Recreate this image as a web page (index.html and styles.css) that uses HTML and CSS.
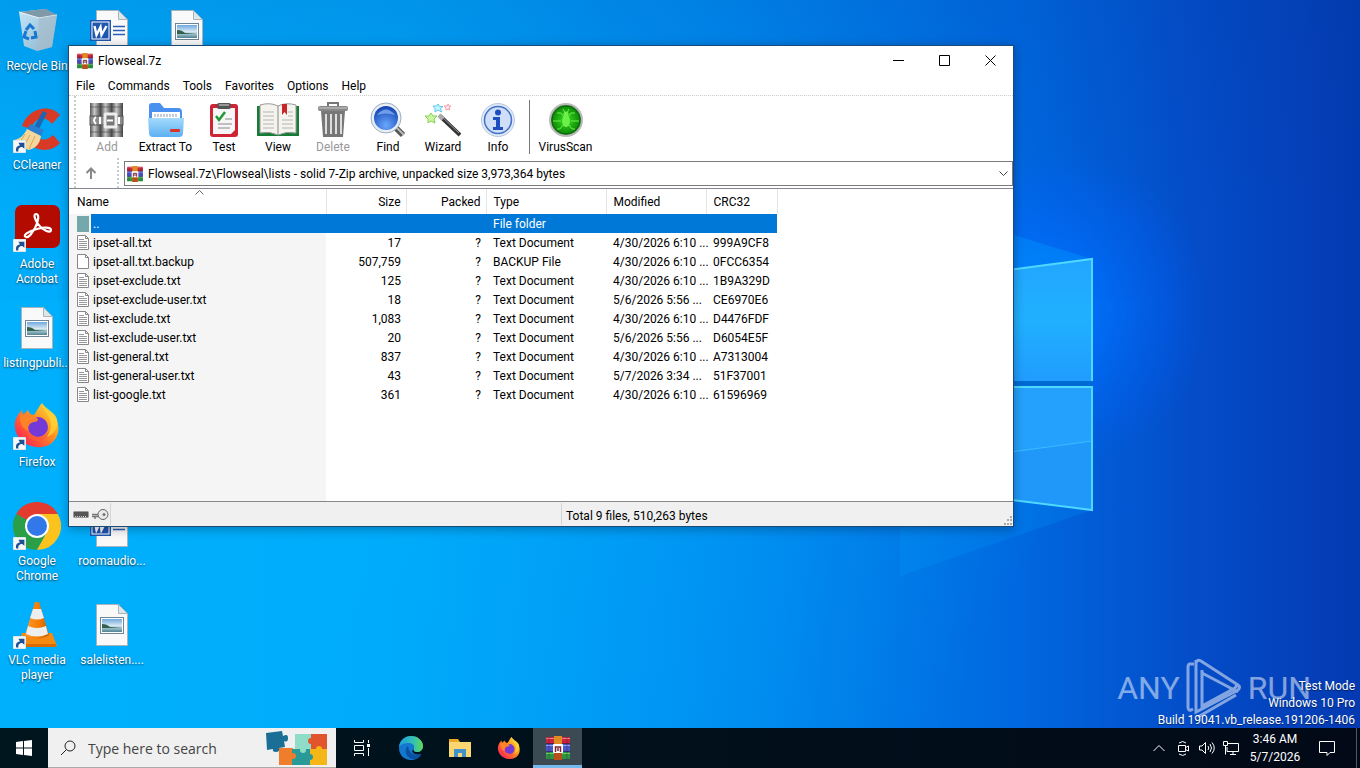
FILE: index.html
```html
<!DOCTYPE html>
<html lang="en">

<head>
    <meta charset="utf-8">
    <meta name="viewport" content="width=device-width, initial-scale=1">
    <title>Flowseal.7z</title>
    <link rel="stylesheet" href="styles.css">
</head>

<body>
    <!-- shared icons -->
    <svg class="defs" aria-hidden="true">
        <defs>
            <linearGradient id="gGlass" x1="0" y1="0" x2="1" y2="1">
                <stop offset="0" stop-color="#e8f3fa" />
                <stop offset="1" stop-color="#9fb4c4" />
            </linearGradient>
            <linearGradient id="gFolder" x1="0" y1="0" x2="0" y2="1">
                <stop offset="0" stop-color="#a4dafc" />
                <stop offset="1" stop-color="#5cb0f2" />
            </linearGradient>
            <linearGradient id="gFox" x1="1" y1="0" x2="0" y2="1">
                <stop offset="0" stop-color="#fff14a" />
                <stop offset=".4" stop-color="#ff9a1f" />
                <stop offset=".75" stop-color="#ff4040" />
                <stop offset="1" stop-color="#e5187f" />
            </linearGradient>
            <linearGradient id="gCone" x1="0" y1="0" x2="1" y2="0">
                <stop offset="0" stop-color="#ff9a2e" />
                <stop offset=".6" stop-color="#f47b00" />
                <stop offset="1" stop-color="#c85a00" />
            </linearGradient>
            <linearGradient id="gMetal" x1="0" y1="0" x2="1" y2="0">
                <stop offset="0" stop-color="#555" />
                <stop offset=".4" stop-color="#c8c8c8" />
                <stop offset="1" stop-color="#444" />
            </linearGradient>
            <linearGradient id="gSky" x1="0" y1="0" x2="0" y2="1">
                <stop offset="0" stop-color="#6fa8e0" />
                <stop offset=".5" stop-color="#d4e8f2" />
                <stop offset="1" stop-color="#4f8394" />
            </linearGradient>
            <radialGradient id="gLens" cx=".5" cy=".8" r=".8">
                <stop offset="0" stop-color="#6aa8ff" />
                <stop offset="1" stop-color="#1240b0" />
            </radialGradient>
            <radialGradient id="gVirus">
                <stop offset="0" stop-color="#3ee01e" />
                <stop offset="1" stop-color="#0b8a08" />
            </radialGradient>
            <linearGradient id="gEdge" x1="0" y1="0" x2="1" y2="0">
                <stop offset="0" stop-color="#1b9de2" />
                <stop offset=".6" stop-color="#35c1b1" />
                <stop offset="1" stop-color="#62d957" />
            </linearGradient>

            <symbol id="winrar" viewBox="0 0 24 24">
                <rect x="0" y="1" width="24" height="7" rx="1" fill="#c8243c" />
                <rect x="0" y="8" width="24" height="8" rx="1" fill="#4a55c8" />
                <rect x="0" y="16" width="24" height="7" rx="1" fill="#2f9440" />
                <path d="M0 2.500h24" stroke="#ee7a84" />
                <path d="M0 9.500h24" stroke="#8fa4ee" />
                <path d="M0 17.500h24" stroke="#74cc68" />
                <path d="M0 7.500h24M0 15.500h24" stroke="#2a1840" stroke-opacity=".6" />
                <path d="M3 1v22M21 1v22" stroke="#201030" stroke-opacity=".3" />
                <rect x="8" y="0" width="8" height="24" fill="#e08a24" />
                <rect x="8" y="17" width="8" height="7" fill="#b8501c" />
                <rect x="7" y="8" width="10" height="9" rx="1" fill="#fff" />
                <path d="M9.500 16v-5h5v5M12 12v3" fill="none" stroke="#7a2430" stroke-width="1.500" />
            </symbol>
            <symbol id="shortcut" viewBox="0 0 12 12">
                <rect width="12" height="12" fill="#f6f8fa" stroke="#9bb4c8" stroke-width=".5" />
                <path d="M3 10.500C2 7 4 5 6.500 5L5 2.500h5.500V8L8.500 6.500C6 6.500 4.500 8 5 10.500z" fill="#1d4f91" />
            </symbol>
            <symbol id="page" viewBox="0 0 32 42">
                <path d="M.5.500h22l9 9v32H.500z" fill="#f9f9f9" stroke="#a8b4bc" />
                <path d="M22.500.500v9h9z" fill="#dfe6ea" stroke="#a8b4bc" />
            </symbol>
            <symbol id="picture" viewBox="0 0 48 48">
                <use href="#page" x="8" y="3" width="32" height="42" />
                <rect x="12.500" y="16.500" width="23" height="16" fill="#fff" stroke="#6d8596" />
                <rect x="14" y="18" width="20" height="13" fill="url(#gSky)" />
                <path d="M14 23q5 0 8 3l12 1H14z" fill="#33604d" />
            </symbol>
            <symbol id="word" viewBox="0 0 48 48">
                <use href="#page" x="8" y="3" width="32" height="42" />
                <path d="M25 19.500h12M25 23.500h12M25 27.500h12" stroke="#2b5fb8" stroke-width="1.500" />
                <rect x="2" y="13" width="21" height="21" fill="#1f56b0" />
                <rect x="3.500" y="14.500" width="18" height="18" fill="#fff" />
                <rect x="4.500" y="15.500" width="16" height="16" fill="#1f56b0" />
                <path d="M6.500 19l2 9 4-8 1 8 5-9" fill="none" stroke="#fff" stroke-width="2.400" />
            </symbol>
            <symbol id="txt" viewBox="0 0 12 15">
                <path d="M.5.500h8l3 3v11H.500z" fill="#fff" stroke="#888" />
                <path d="M8.500.500v3h3" fill="none" stroke="#888" />
                <path d="M2 4.500h5M2 6.500h8M2 8.500h8M2 10.500h8M2 12.500h8" stroke="#999" />
            </symbol>
            <symbol id="blank" viewBox="0 0 12 15">
                <path d="M.5.500h8l3 3v11H.500z" fill="#fff" stroke="#888" />
                <path d="M8.500.500v3h3" fill="none" stroke="#888" />
            </symbol>
            <symbol id="firefox" viewBox="0 0 48 48">
                <path d="M2 27C1 20 4 14 9 9l1 5 5-5c1 3 3 5 6 5 3-4 5-9 8-12 2 6 8 8 12 12 5 7 6 16 2 23-5 8-13 10-20 9C12 45 3 37 2 27z" fill="url(#gFox)" />
                <path d="M29 2c0 8 9 12 9 22 0 7-4 11-9 13 10-1 17-9 15-19-2-7-10-9-15-16z" fill="#ffd335" opacity=".8" />
                <circle cx="25" cy="26" r="10" fill="#7539d8" />
                <path d="M7 14c6-3 13 0 17 3 2 1 1 4-3 4-5 1-7 5-5 9-6-1-10-8-9-16z" fill="#ff8427" opacity=".95" />
                <path d="M15 29c2 5 8 8 14 7 3-1 6-3 7-6 0 9-12 13-19 7-2-2-3-5-2-8z" fill="#ff5a38" opacity=".8" />
            </symbol>
        </defs>
    </svg>

    <main class="desktop">
        <svg class="wallpaper" viewBox="0 0 1360 728" preserveAspectRatio="none" aria-hidden="true">
            <defs>
                <linearGradient id="wBase" x1="0" y1="0" x2="1" y2="0">
                    <stop offset="0" stop-color="#00adfb" />
                    <stop offset=".3" stop-color="#00a4f8" />
                    <stop offset=".55" stop-color="#0088ee" />
                    <stop offset=".75" stop-color="#0068e0" />
                    <stop offset=".88" stop-color="#044cc8" />
                    <stop offset="1" stop-color="#043ab2" />
                </linearGradient>
                <linearGradient id="wTop" x1="0" y1="0" x2="0" y2="1">
                    <stop offset="0" stop-color="#003c9c" stop-opacity=".15" />
                    <stop offset=".3" stop-color="#003c9c" stop-opacity="0" />
                </linearGradient>
                <radialGradient id="wGlow" gradientUnits="userSpaceOnUse" cx="1050" cy="310" r="160">
                    <stop offset="0" stop-color="#0078ff" />
                    <stop offset="1" stop-color="#0060ff" stop-opacity="0" />
                </radialGradient>
                <linearGradient id="wPane" x1="0" y1="0" x2="0" y2="1">
                    <stop offset="0" stop-color="#22a6ff" />
                    <stop offset=".5" stop-color="#20b0ff" />
                    <stop offset="1" stop-color="#209cff" />
                </linearGradient>
                <linearGradient id="wRay" gradientUnits="userSpaceOnUse" x1="960" y1="700" x2="400" y2="420">
                    <stop offset="0" stop-color="#00b4ff" stop-opacity="0" />
                    <stop offset="1" stop-color="#00b4ff" stop-opacity=".45" />
                </linearGradient>
            </defs>
            <rect width="1360" height="728" fill="url(#wBase)" />
            <rect width="1360" height="728" fill="url(#wTop)" />
            <path d="M0 300h1360v428H0z" fill="url(#wRay)" />
            <rect x="860" y="130" width="400" height="400" fill="url(#wGlow)" />
            <path d="M900 200L1092 259 900 284z" fill="#00a0ff" opacity=".35" />
            <path d="M1092 510L900 486v90z" fill="#00a0ff" opacity=".2" />
            <path d="M900 284l192-25v122H900z" fill="url(#wPane)" />
            <path d="M900 387h192v123l-192-24z" fill="#2098fa" />
            <path d="M900 387h192v54l-192 26z" fill="#28a6ff" opacity=".6" />
            <path d="M900 467l192-26" stroke="#3cbcff" />
            <path d="M900 381h192v6H900z" fill="#006ad4" />
            <path d="M900 284l192-25v122M900 387h192v123l-192-24" fill="none" stroke="#4ed8ff" stroke-width="2" />
        </svg>

        <div class="icons">
            <button class="icon" type="button">
                <svg viewBox="0 0 48 48">
                    <path d="M6 5l26-3 12 6-5 32-15 4-13-5z" fill="url(#gGlass)" opacity=".85" />
                    <path d="M6 5l20 6 18-3-12-6z" fill="#7f99a8" />
                    <path d="M6 5l20 6 18-3" fill="none" stroke="#eef6fb" />
                    <path d="M26 11l-2 33 15-4 5-32z" fill="#a5bccb" opacity=".7" />
                    <path d="M13 23l4-5 4 4M22 24l1 6-5 1M16 32l-5-2 2-6" fill="none" stroke="#1877cf" stroke-width="3" />
                </svg>
                <span>Recycle Bin</span>
            </button>
            <button class="icon" type="button">
                <svg viewBox="0 0 48 48">
                    <path d="M47 9C37-3 15 2 9 20l9 3C22 10 34 10 39 18zM47 37c-8 9-22 9-30 1l7-7c6 5 12 2 16-2z" fill="#d93a25" />
                    <path d="M30 5l4 2-8 16-5-2z" fill="#1c67b3" />
                    <path d="M17 18l14 6-3 6-14-6z" fill="#2b7fd0" />
                    <path d="M14 23l14 7c-1 8-6 13-13 14L1 34c6-1 10-5 13-11z" fill="#f5d69b" />
                    <path d="M12 28l-5 8M17 29l-6 11M22 30l-6 13" stroke="#d7a95c" />
                    <use href="#shortcut" x="0" y="34" width="13" height="13" />
                </svg>
                <span>CCleaner</span>
            </button>
            <button class="icon" type="button">
                <svg viewBox="0 0 48 48">
                    <rect x="2" y="0" width="45" height="43" rx="7" fill="#b30b00" />
                    <path d="M13 32c-4-1 2-6 11-8 6-2 14-2 14 1 0 4-9 0-13-6-3-4-5-10-2-10 4 0 2 8-1 14-3 5-6 10-9 9z" fill="none" stroke="#fff" stroke-width="2.200" />
                    <use href="#shortcut" x="0" y="34" width="13" height="13" />
                </svg>
                <span>Adobe Acrobat</span>
            </button>
            <button class="icon" type="button">
                <svg><use href="#picture" /></svg>
                <span>listingpubli...</span>
            </button>
            <button class="icon" type="button">
                <svg viewBox="0 0 48 48">
                    <use href="#firefox" y="-2" width="48" height="48" />
                    <use href="#shortcut" x="0" y="34" width="13" height="13" />
                </svg>
                <span>Firefox</span>
            </button>
            <button class="icon" type="button">
                <svg viewBox="0 0 48 48">
                    <path d="M24 24L3.200 12A24 24 0 0 1 44.800 12z" fill="#e33b2e" />
                    <path d="M24 24L3.200 12A24 24 0 0 0 24 48l10-18z" fill="#2b9f47" />
                    <path d="M24 24l10 6-10 18A24 24 0 0 0 44.800 12H24z" fill="#fcc31e" />
                    <circle cx="24" cy="24" r="12" fill="#fff" />
                    <circle cx="24" cy="24" r="10" fill="#3278ea" />
                    <use href="#shortcut" x="0" y="35" width="13" height="13" />
                </svg>
                <span>Google Chrome</span>
            </button>
            <button class="icon" type="button">
                <svg viewBox="0 0 48 48">
                    <path d="M9 32h30l5 13H5z" fill="#f58a12" />
                    <path d="M5 43h38v3H5z" fill="#d96c00" />
                    <path d="M22 1h4l10 33q-12 8-24 0z" fill="url(#gCone)" />
                    <path d="M20 8h8l3 9q-7 3-14 0zM15 25q9 4 18 0l2 8q-11 5-22 0z" fill="#eee" />
                    <use href="#shortcut" x="0" y="35" width="13" height="13" />
                </svg>
                <span>VLC media player</span>
            </button>
            <button class="icon word-top" type="button" aria-label="Document">
                <svg><use href="#word" /></svg>
            </button>
            <button class="icon room" type="button">
                <svg><use href="#word" /></svg>
                <span>roomaudio...</span>
            </button>
            <button class="icon sale" type="button">
                <svg><use href="#picture" /></svg>
                <span>salelisten....</span>
            </button>
            <button class="icon pic-top" type="button" aria-label="Picture">
                <svg><use href="#picture" /></svg>
            </button>
        </div>

        <section class="window">
            <header class="titlebar">
                <svg class="icon16"><use href="#winrar" /></svg>
                <h1>Flowseal.7z</h1>
                <button type="button" aria-label="Minimize"><svg viewBox="0 0 11 11"><path d="M0 5.500h11" /></svg></button>
                <button type="button" aria-label="Maximize"><svg viewBox="0 0 11 11"><path d="M.5.500h10v10H.500z" /></svg></button>
                <button type="button" aria-label="Close"><svg viewBox="0 0 11 11"><path d="M.5.500l10 10M10.500.500l-10 10" /></svg></button>
            </header>
            <nav class="menu">
                <button type="button">File</button>
                <button type="button">Commands</button>
                <button type="button">Tools</button>
                <button type="button">Favorites</button>
                <button type="button">Options</button>
                <button type="button">Help</button>
            </nav>
            <div class="toolbar">
                <button type="button" disabled>
                    <svg viewBox="0 0 36 36">
                        <rect x="1" y="1" width="11" height="34" fill="url(#gMetal)" />
                        <rect x="12" y="1" width="11" height="34" fill="url(#gMetal)" />
                        <rect x="23" y="1" width="11" height="34" fill="url(#gMetal)" />
                        <path d="M1 5h33M1 30h33" stroke="#444" stroke-opacity=".6" />
                        <rect x="1" y="14" width="33" height="9" fill="#8d8d8d" stroke="#555" />
                        <rect x="16" y="12" width="11" height="13" rx="1" fill="#777" stroke="#eee" stroke-width="3" />
                        <path d="M7 15q-4 3 0 7M11 15v7M18 18.500h6M30 15v7" fill="none" stroke="#fff" stroke-width="2" />
                    </svg>
                    Add
                </button>
                <button type="button" class="wide">
                    <svg viewBox="0 0 36 36">
                        <path d="M1 4q0-3 3-3h8l4 5h14q4 0 4 4v20H1z" fill="#4a90f0" />
                        <path d="M4 10h28v12H4z" fill="#fff" />
                        <path d="M7 12v3M10 12v3M13 12v3M16 12v3M19 12v3M22 12v3M25 12v3M28 12v3" stroke="#89a" />
                        <path d="M0 16h36l-1 15q0 4-4 4H5q-4 0-4-4z" fill="url(#gFolder)" />
                        <rect x="22" y="27" width="10" height="3" rx="1" fill="#d8342c" />
                    </svg>
                    Extract To
                </button>
                <button type="button">
                    <svg viewBox="0 0 36 36">
                        <rect x="4" y="2" width="28" height="33" rx="3" fill="#cf2434" />
                        <path d="M7 6h22v22l-4 4H7z" fill="#f6f6f6" />
                        <rect x="11" y="1" width="14" height="6" rx="2" fill="#555" />
                        <path d="M13 3h10" stroke="#ddd" />
                        <path d="M10 14l3 4 6-8" fill="none" stroke="#219a35" stroke-width="2.500" />
                        <path d="M19 17h7M12 22h14M12 26h12" stroke="#888" />
                    </svg>
                    Test
                </button>
                <button type="button">
                    <svg viewBox="0 0 42 36">
                        <path d="M0 4h42v30H0z" fill="#157c35" />
                        <path d="M3 3q10-3 18 1 8-4 18-1v28q-10-2-18 2-8-4-18-2z" fill="#f4f3ee" stroke="#999" />
                        <path d="M21 4v29" stroke="#888" />
                        <path d="M6 10h11M6 14h11M6 18h11M6 22h11M6 26h11M25 18h11M25 22h11M25 26h11M31 14h5M31 10h5" stroke="#b5b5b5" />
                        <path d="M25 2h5v11l-2.500-3-2.500 3z" fill="#c9252b" />
                    </svg>
                    View
                </button>
                <button type="button" class="mid" disabled>
                    <svg viewBox="0 0 36 36">
                        <path d="M13 4V1h10v3" fill="none" stroke="#777" stroke-width="2" />
                        <path d="M6 9h24l-2 26H8z" fill="#777" />
                        <path d="M11 12v20M16 12v20M21 12v20M26 12v20" stroke="#ddd" stroke-width="2" />
                        <rect x="3" y="4" width="30" height="5" rx="2" fill="#888" />
                        <path d="M4 6h28" stroke="#ccc" />
                    </svg>
                    Delete
                </button>
                <button type="button">
                    <svg viewBox="0 0 36 36">
                        <path d="M25 25l8 8" stroke="#555" stroke-width="6" />
                        <path d="M26 25l8 8" stroke="#bbb" stroke-width="2" />
                        <circle cx="16" cy="16" r="15" fill="#e7eef6" stroke="#9aacc2" />
                        <circle cx="16" cy="16" r="12" fill="url(#gLens)" />
                        <path d="M7 13q9-11 18 0-9-3-18 0z" fill="#8bb8f8" opacity=".7" />
                    </svg>
                    Find
                </button>
                <button type="button" class="mid">
                    <svg viewBox="0 0 36 36">
                        <path d="M15 14l20 19" stroke="#333" stroke-width="4" />
                        <path d="M15 13l19 18" stroke="#999" />
                        <path d="M14 13l4 4" stroke="#aaa" stroke-width="4" />
                        <path d="M13 2l1.500 2.500h3.500l-2.500 2 1 3.500-3.500-2-3 2v-3.500l-2-2.500h3.500z" fill="#c8f4ff" stroke="#5cc8ee" />
                        <path d="M6 11l2 3 4 0-3 3 1 4-4-2-3 2 0-4-3-3h4z" fill="#cdf6a2" stroke="#83d452" />
                        <path d="M23 2l1 2h2l-2 2 1 2-2-1-2 1v-2l-2-2h3z" fill="#ffe4e8" stroke="#f4a0ac" />
                    </svg>
                    Wizard
                </button>
                <button type="button">
                    <svg viewBox="0 0 36 36">
                        <circle cx="18" cy="18" r="16.500" fill="#dfe9fa" stroke="#b9c9e2" />
                        <circle cx="18" cy="18" r="13.500" fill="#cfdffa" stroke="#4471c4" stroke-width="1.500" />
                        <circle cx="18" cy="10.500" r="3" fill="#1e4fc0" />
                        <path d="M13 15h7v10h3v3H13v-3h3v-7h-3z" fill="#1e4fc0" />
                    </svg>
                    Info
                </button>
                <span class="sep"></span>
                <button type="button" class="wide">
                    <svg viewBox="0 0 36 36">
                        <circle cx="18" cy="18" r="16" fill="#3a7d38" stroke="#bbb" stroke-width="2" />
                        <circle cx="18" cy="18" r="14" fill="url(#gVirus)" stroke="#0a6508" />
                        <path d="M9 11h4l3 4M27 11h-4l-3 4M5 19h8M31 19h-8M9 27h3l3-4M27 27h-3l-3-4M15 7l2 4M21 7l-2 4" fill="none" stroke="#6cf04a" />
                        <ellipse cx="18" cy="19" rx="4" ry="6" fill="#6cf04a" />
                        <circle cx="18" cy="12" r="2.500" fill="#6cf04a" />
                    </svg>
                    VirusScan
                </button>
            </div>
            <div class="address">
                <button class="up" type="button" aria-label="Up">
                    <svg viewBox="0 0 12 12"><path d="M6 12V2M1.500 6L6 1.500 10.500 6" /></svg>
                </button>
                <div class="path">
                    <svg class="icon16"><use href="#winrar" /></svg>
                    <select aria-label="Path">
                        <option>Flowseal.7z\Flowseal\lists - solid 7-Zip archive, unpacked size 3,973,364 bytes</option>
                    </select>
                    <svg class="chevron" viewBox="0 0 9 6"><path d="M.5.500l4 4 4-4" /></svg>
                </div>
            </div>
            <div class="files">
                <table>
                    <thead>
                        <tr>
                            <th class="name">Name<svg class="sort" viewBox="0 0 9 5"><path d="M.5 4.500l4-4 4 4" /></svg></th>
                            <th class="size num">Size</th>
                            <th class="size num">Packed</th>
                            <th class="type">Type</th>
                            <th class="modified">Modified</th>
                            <th class="crc">CRC32</th>
                        </tr>
                    </thead>
                    <tbody>
                        <tr class="selected">
                            <td><i class="updir"></i><span>..</span></td>
                            <td></td>
                            <td></td>
                            <td>File folder</td>
                            <td></td>
                            <td></td>
                        </tr>
                        <tr>
                            <td><svg><use href="#txt" /></svg><span>ipset-all.txt</span></td>
                            <td class="num">17</td>
                            <td class="num">?</td>
                            <td>Text Document</td>
                            <td>4/30/2026 6:10 ...</td>
                            <td>999A9CF8</td>
                        </tr>
                        <tr>
                            <td><svg><use href="#blank" /></svg><span>ipset-all.txt.backup</span></td>
                            <td class="num">507,759</td>
                            <td class="num">?</td>
                            <td>BACKUP File</td>
                            <td>4/30/2026 6:10 ...</td>
                            <td>0FCC6354</td>
                        </tr>
                        <tr>
                            <td><svg><use href="#txt" /></svg><span>ipset-exclude.txt</span></td>
                            <td class="num">125</td>
                            <td class="num">?</td>
                            <td>Text Document</td>
                            <td>4/30/2026 6:10 ...</td>
                            <td>1B9A329D</td>
                        </tr>
                        <tr>
                            <td><svg><use href="#txt" /></svg><span>ipset-exclude-user.txt</span></td>
                            <td class="num">18</td>
                            <td class="num">?</td>
                            <td>Text Document</td>
                            <td>5/6/2026 5:56 ...</td>
                            <td>CE6970E6</td>
                        </tr>
                        <tr>
                            <td><svg><use href="#txt" /></svg><span>list-exclude.txt</span></td>
                            <td class="num">1,083</td>
                            <td class="num">?</td>
                            <td>Text Document</td>
                            <td>4/30/2026 6:10 ...</td>
                            <td>D4476FDF</td>
                        </tr>
                        <tr>
                            <td><svg><use href="#txt" /></svg><span>list-exclude-user.txt</span></td>
                            <td class="num">20</td>
                            <td class="num">?</td>
                            <td>Text Document</td>
                            <td>5/6/2026 5:56 ...</td>
                            <td>D6054E5F</td>
                        </tr>
                        <tr>
                            <td><svg><use href="#txt" /></svg><span>list-general.txt</span></td>
                            <td class="num">837</td>
                            <td class="num">?</td>
                            <td>Text Document</td>
                            <td>4/30/2026 6:10 ...</td>
                            <td>A7313004</td>
                        </tr>
                        <tr>
                            <td><svg><use href="#txt" /></svg><span>list-general-user.txt</span></td>
                            <td class="num">43</td>
                            <td class="num">?</td>
                            <td>Text Document</td>
                            <td>5/7/2026 3:34 ...</td>
                            <td>51F37001</td>
                        </tr>
                        <tr>
                            <td><svg><use href="#txt" /></svg><span>list-google.txt</span></td>
                            <td class="num">361</td>
                            <td class="num">?</td>
                            <td>Text Document</td>
                            <td>4/30/2026 6:10 ...</td>
                            <td>61596969</td>
                        </tr>
                    </tbody>
                </table>
            </div>
            <footer class="status">
                <div class="status-icons">
                    <svg viewBox="0 0 36 14">
                        <rect x=".5" y="4.500" width="15" height="6" rx="1" fill="#555" stroke="#999" />
                        <path d="M2 9.500h12" stroke="#ccc" stroke-dasharray="1 1" />
                        <path d="M19 7.500h9M19 9.500h9M22 9v3" fill="none" stroke="#777" stroke-width="1.500" />
                        <circle cx="30" cy="7.500" r="5" fill="#e8e8e8" stroke="#666" />
                        <circle cx="31" cy="7.500" r="1.500" fill="#777" />
                    </svg>
                </div>
                <div class="status-left"></div>
                <div class="status-text">Total 9 files, 510,263 bytes</div>
                <svg class="grip" viewBox="0 0 10 10"><path d="M7 1h2M4 4h2M7 4h2M1 8h2M4 8h2M7 8h2" stroke="#aaa" stroke-width="2" /></svg>
            </footer>
        </section>

        <div class="watermark">
            <span>ANY</span>
            <svg viewBox="0 0 56 62" aria-hidden="true">
                <path d="M8 7H4q-2 0-2 3v40q0 4 3 3l2-1M10 3v52l42-22q3-3 0-5L15 4q-4-2-5 2M16 16l36 19M16 13v36l33-18q3-3 0-5M12 60l38-22" />
            </svg>
            <span>RUN</span>
        </div>
        <p class="build">Test Mode<br>Windows 10 Pro<br>Build 19041.vb_release.191206-1406</p>
    </main>

    <footer class="taskbar">
        <button class="start" type="button" aria-label="Start">
            <svg viewBox="0 0 16 16"><path d="M0 2l7-1v6.500H0zM8 1l8-1v7.500H8zM0 8.500h7V15l-7-1zM8 8.500h8V16l-8-1z" /></svg>
        </button>
        <label class="search">
            <svg class="glass" viewBox="0 0 16 16"><circle cx="10" cy="6" r="5" /><path d="M6.500 9.500L1 15" /></svg>
            <input type="text" placeholder="Type here to search">
            <svg class="puzzle" viewBox="0 0 64 36" aria-hidden="true">
                <path d="M14 18h14v17H14z" fill="#ef7d2c" />
                <path d="M30 4h16v15H30z" fill="#8fdcc8" />
                <path d="M46 4h16v15H46z" fill="#e2542b" />
                <path d="M27 19h18v16H27z" fill="#2a9a98" />
                <path d="M45 19h17v16H45z" fill="#f5b617" />
                <path d="M1 3l16-2 1 5q5-3 5 2t-4 3l1 6-6 1q1 4-3 4t-3-3l-6 1z" fill="#1b6e96" />
                <circle cx="38" cy="20" r="3" fill="#8fdcc8" />
                <circle cx="46" cy="11" r="3" fill="#e2542b" />
                <circle cx="54" cy="19" r="3" fill="#f5b617" />
                <circle cx="45" cy="27" r="3" fill="#2a9a98" />
                <circle cx="28" cy="26" r="3" fill="#ef7d2c" />
            </svg>
        </label>
        <nav class="apps">
            <button type="button" aria-label="Task View">
                <svg viewBox="0 0 24 24"><path d="M4.500 4v2.500h9V4M4.500 9.500h9v5h-9zM4.500 20v-2.500h9V20M18.500 4v3M18.500 12v8" fill="none" stroke="#fff" /><rect x="17" y="8" width="3" height="3" fill="#fff" /></svg>
            </button>
            <button type="button" aria-label="Edge">
                <svg viewBox="0 0 24 24">
                    <path d="M0 12C0 5 5 0 12 0s12 5 12 10c0 4-3 6-6 6-2 0-4-1-3-3l-2 2c2 4 6 4 9 3-2 4-6 6-10 6C5 24 0 19 0 12z" fill="#1478d0" />
                    <path d="M0 11C1 4 6 0 12 0c7 0 12 5 12 10 0 4-3 6-6 6-2 0-4-1-3-3 1-3-1-6-5-6C5 7 1 9 0 11z" fill="url(#gEdge)" />
                    <path d="M9 10c-4 3-3 11 4 13 4 1 8-1 9-5-6 2-12 0-13-8z" fill="#0c50a0" />
                </svg>
            </button>
            <button type="button" aria-label="File Explorer">
                <svg viewBox="0 0 24 24">
                    <path d="M1 3h9l2 3h11v4H1z" fill="#e9a825" />
                    <path d="M1 6h22v15H1z" fill="#fcd670" />
                    <path d="M6 21v-8h12v8h-4v-4h-4v4z" fill="#3f92cc" />
                </svg>
            </button>
            <button type="button" aria-label="Firefox"><svg><use href="#firefox" /></svg></button>
            <button type="button" class="active" aria-label="WinRAR"><svg><use href="#winrar" /></svg></button>
        </nav>
        <div class="tray">
            <svg viewBox="0 0 16 16"><path d="M2.500 11L8 5.500l5.500 5.500" /></svg>
            <svg viewBox="0 0 16 16"><path d="M3.500 5.500h7v6h-7zM10.500 7.500l3-1.500v5l-3-1.500M4 3q4-3 7 0M4 14q4 3 7 0" /></svg>
            <svg viewBox="0 0 16 16"><path d="M.5 6h2.500l3.500-3.500v11L3 10H.500zM9 6q1.500 2 0 4M11 4q3 4 0 8M13 2.500q4.500 5.500 0 11" /></svg>
            <svg viewBox="0 0 16 16"><path d="M5 3.500h10.500v8H4V7M7 14.500h6M10 11.500v3M.5 1.500h4v4h-4zM2.500 5.500v9" /></svg>
        </div>
        <div class="clock">3:46 AM<br>5/7/2026</div>
        <button class="notify" type="button" aria-label="Notifications">
            <svg viewBox="0 0 16 16"><path d="M.5 1.500h15v11H11L8 15.500 8 12.500H.500z" /></svg>
        </button>
    </footer>
</body>

</html>
```
FILE: styles.css
```css
* {
    box-sizing: border-box;
}

body {
    margin: 0;
    height: 100vh;
    display: grid;
    grid-template-rows: 1fr 40px;
    overflow: hidden;
    font-family: Roboto, "Open Sans", sans-serif;
    font-size: 12px;
    line-height: 15px;
    color: #000;
}

button,
select,
input {
    font: inherit;
    color: inherit;
    background: none;
    border: 0;
    padding: 0;
    margin: 0;
}

svg {
    display: block;
    flex: none;
}

.defs {
    position: absolute;
    width: 0;
    height: 0;
}

/* desktop */
.desktop {
    position: relative;
    overflow: hidden;
    min-height: 0;
}

.wallpaper {
    position: absolute;
    width: 100%;
    height: 100%;
}

.icons {
    position: relative;
    display: inline-grid;
    grid-template-rows: repeat(7, 99px);
    grid-auto-columns: 75px;
    grid-auto-flow: column;
}

.icon {
    display: flex;
    flex-direction: column;
    align-items: center;
    gap: 4px;
    padding: 7px 1px 0 0;
    color: #fff;
    text-align: center;
    text-shadow: 0 1px 2px rgba(0, 0, 0, .7);
}

.icon svg {
    width: 48px;
    height: 48px;
}

.word-top {
    grid-area: 1 / 2;
}

.room {
    grid-area: 6 / 2;
}

.sale {
    grid-area: 7 / 2;
}

.pic-top {
    grid-area: 1 / 3;
}

/* archive window */
.window {
    position: absolute;
    left: 68px;
    top: 45px;
    right: 346px;
    bottom: 201px;
    display: flex;
    flex-direction: column;
    background: #fff;
    border: 1px solid #1a4a78;
    box-shadow: 0 2px 10px rgba(0, 0, 0, .3);
}

.titlebar {
    display: flex;
    align-items: center;
    height: 29px;
    padding-left: 8px;
}

.titlebar h1 {
    flex: 1;
    margin: 0;
    padding: 2px 0 0 5px;
    font-size: 12px;
    font-weight: normal;
}

.titlebar button {
    width: 46px;
    height: 29px;
    display: grid;
    place-items: center;
}

.titlebar button svg {
    width: 11px;
    height: 11px;
    fill: none;
    stroke: #000;
}

.icon16 {
    width: 16px;
    height: 16px;
}

.menu {
    display: flex;
    gap: 13px;
    height: 21px;
    padding: 2px 0 0 7px;
    border-bottom: 1px dotted #ccc;
}

.toolbar {
    display: flex;
    height: 62px;
    margin-left: 5px;
    padding: 6px 0 0 4px;
    border-left: 2px dotted #c4cccc;
}

.toolbar button {
    width: 54px;
    display: flex;
    flex-direction: column;
    align-items: center;
    gap: 2px;
}

.toolbar button.mid {
    width: 56px;
}

.toolbar button.wide {
    width: 63px;
}

.toolbar button svg {
    height: 36px;
    max-width: 42px;
}

.toolbar button:disabled {
    color: #999;
}

.sep {
    width: 1px;
    height: 54px;
    margin: -2px 4px 0;
    background: #777;
}

.address {
    display: flex;
    height: 30px;
    margin-left: 5px;
    border-left: 2px dotted #c4cccc;
}

.up {
    width: 43px;
    padding-left: 9px;
    border-right: 2px dotted #c4cccc;
}

.up svg {
    width: 12px;
    height: 12px;
    fill: none;
    stroke: #888;
    stroke-width: 2;
}

.path {
    flex: 1;
    display: flex;
    align-items: center;
    height: 25px;
    margin: 3px 0 0 5px;
    padding: 0 4px 0 2px;
    border: 1px solid #7a7a7a;
}

.path select {
    flex: 1;
    min-width: 0;
    margin-left: 5px;
    padding-top: 2px;
    appearance: none;
    outline: none;
}

.chevron {
    width: 9px;
    height: 6px;
    fill: none;
    stroke: #444;
}

.files {
    flex: 1;
    min-height: 0;
    overflow: hidden;
    border-top: 1px solid #828790;
    background: linear-gradient(#f5f5f5, #f5f5f5) 0 25px / 257px 100% no-repeat;
}

.files table {
    width: 708px;
    table-layout: fixed;
    border-collapse: collapse;
}

.files th {
    position: relative;
    height: 25px;
    padding: 1px 5px 0 7px;
    font-weight: normal;
    text-align: left;
    border-right: 1px solid #e5e5e5;
}

.files th.name {
    width: 257px;
    padding-left: 8px;
}

.files .size {
    width: 80px;
}

.files .type {
    width: 120px;
}

.files .modified {
    width: 100px;
}

.files .crc {
    width: 71px;
}

.files td {
    height: 19px;
    padding: 2px 5px 0 7px;
    white-space: nowrap;
}

.files td:first-child {
    display: flex;
    align-items: center;
    gap: 4px;
    padding: 0 0 0 8px;
}

.files td span {
    padding-top: 2px;
}

.files .num {
    text-align: right;
}

.files td svg {
    width: 12px;
    height: 15px;
}

.sort {
    position: absolute;
    left: 126px;
    top: 1px;
    width: 9px;
    height: 5px;
    fill: none;
    stroke: #666;
}

.files .selected {
    background: #0078d7;
    color: #fff;
}

.files .selected td:first-child {
    background: linear-gradient(#f5f5f5, #f5f5f5) 0 0 / 22px 100% no-repeat;
}

.updir {
    width: 12px;
    height: 16px;
    background: #74a8ab;
}

.status {
    display: flex;
    align-items: center;
    height: 25px;
    background: #f0f0f0;
    border-top: 1px solid #888;
}

.status-icons {
    width: 42px;
    height: 22px;
    padding: 4px 0 0 4px;
    border-right: 1px solid #d4d4d4;
}

.status-icons svg {
    width: 36px;
    height: 14px;
}

.status-left {
    width: 451px;
    height: 22px;
    border-right: 1px solid #d4d4d4;
}

.status-text {
    flex: 1;
    padding: 4px 0 0 4px;
}

.grip {
    align-self: flex-end;
    width: 10px;
    height: 10px;
}

/* desktop corner */
.watermark {
    position: absolute;
    right: 49px;
    bottom: 9px;
    display: flex;
    align-items: center;
    gap: 6px;
    font: 32px/62px Roboto, "Open Sans", sans-serif;
    color: #fff;
    opacity: .5;
}

.watermark svg {
    width: 56px;
    height: 62px;
    fill: none;
    stroke: #fff;
    stroke-width: 3;
}

.build {
    position: absolute;
    right: 5px;
    bottom: -1px;
    margin: 0;
    color: #fff;
    line-height: 17px;
    text-align: right;
    text-shadow: 0 1px 1px rgba(0, 0, 0, .5);
}

/* taskbar */
.taskbar {
    display: flex;
    background: linear-gradient(90deg, #00161f, #020917);
    color: #fff;
}

.start {
    width: 48px;
    display: grid;
    place-items: center;
}

.start svg {
    width: 16px;
    height: 16px;
    fill: #fff;
}

.search {
    display: flex;
    align-items: center;
    width: 288px;
    padding: 0 7px 0 12px;
    background: #f0f0f0;
    border-bottom: 1px solid #aaa;
}

.glass {
    width: 16px;
    height: 16px;
    fill: none;
    stroke: #222;
}

.search input {
    flex: 1;
    min-width: 0;
    margin-left: 12px;
    padding-top: 2px;
    font-family: "Open Sans", sans-serif;
    font-size: 14px;
    line-height: 20px;
}

.search input::placeholder {
    color: #444;
    opacity: 1;
}

.puzzle {
    width: 64px;
    height: 36px;
}

.apps {
    display: flex;
    flex: 1;
    padding-left: 1px;
}

.apps button {
    width: 49px;
    display: grid;
    place-items: center;
}

.apps svg {
    width: 24px;
    height: 24px;
}

.apps .active {
    background: #3c4a54;
    box-shadow: inset 0 -3px #76b9ed;
}

.tray {
    display: flex;
    align-items: center;
    gap: 8px;
}

.tray svg,
.notify svg {
    width: 16px;
    height: 16px;
    fill: none;
    stroke: #fff;
}

.clock {
    width: 72px;
    padding-top: 2px;
    line-height: 18px;
    text-align: center;
}

.notify {
    width: 46px;
    margin-right: 3px;
    padding-left: 8px;
    border-right: 1px solid #556;
    display: grid;
    place-items: center start;
}
```
